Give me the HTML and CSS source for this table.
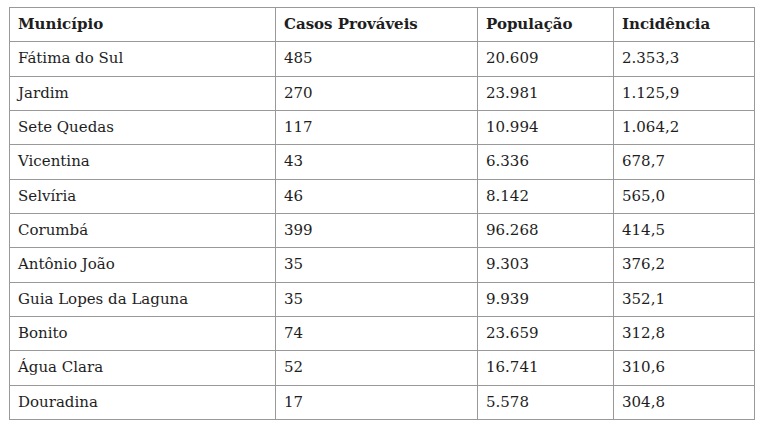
FILE: index.html
```html
<!DOCTYPE html>
<html lang="pt-BR">
<head>
<meta charset="utf-8">
<title>Casos prováveis</title>
<link rel="stylesheet" href="styles.css">
</head>
<body>
<table class="data">
  <thead>
    <tr><th class="c1">Município</th><th class="c2">Casos Prováveis</th><th class="c3">População</th><th class="c4">Incidência</th></tr>
  </thead>
  <tbody>
    <tr><td>Fátima do Sul</td><td>485</td><td>20.609</td><td>2.353,3</td></tr>
    <tr><td>Jardim</td><td>270</td><td>23.981</td><td>1.125,9</td></tr>
    <tr><td>Sete Quedas</td><td>117</td><td>10.994</td><td>1.064,2</td></tr>
    <tr><td>Vicentina</td><td>43</td><td>6.336</td><td>678,7</td></tr>
    <tr><td>Selvíria</td><td>46</td><td>8.142</td><td>565,0</td></tr>
    <tr><td>Corumbá</td><td>399</td><td>96.268</td><td>414,5</td></tr>
    <tr><td>Antônio João</td><td>35</td><td>9.303</td><td>376,2</td></tr>
    <tr><td>Guia Lopes da Laguna</td><td>35</td><td>9.939</td><td>352,1</td></tr>
    <tr><td>Bonito</td><td>74</td><td>23.659</td><td>312,8</td></tr>
    <tr><td>Água Clara</td><td>52</td><td>16.741</td><td>310,6</td></tr>
    <tr><td>Douradina</td><td>17</td><td>5.578</td><td>304,8</td></tr>
  </tbody>
</table>
</body>
</html>
```

FILE: styles.css
```css
html, body {
  background: #fff;
}
body {
  margin: 7px 9px;
  font-family: "DejaVu Serif", "Liberation Serif", serif;
  font-size: 15px;
  color: #1e1e1e;
}
.data {
  border-collapse: collapse;
  width: 745px;
  table-layout: fixed;
}
.data th,
.data td {
  box-sizing: border-box;
  border: 1px solid #999;
  height: 34.33px;
  padding: 0 8px;
  text-align: left;
  vertical-align: middle;
  line-height: 1;
}
.data th {
  font-weight: bold;
}
.c1 { width: 266px; }
.c2 { width: 202px; }
.c3 { width: 136px; }
.c4 { width: 141px; }
```
